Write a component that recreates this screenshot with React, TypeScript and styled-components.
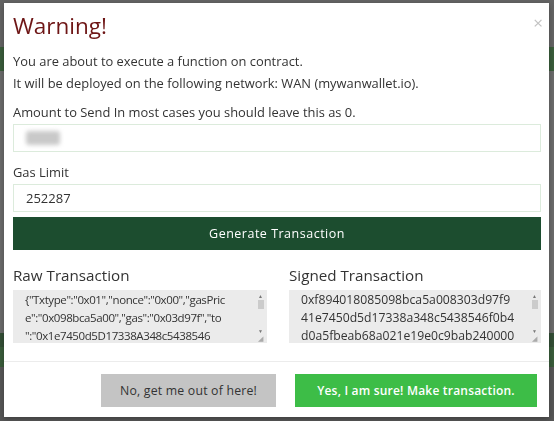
import React from "react";
import styled, { createGlobalStyle } from "styled-components";

const GlobalStyle = createGlobalStyle`
html, body {
  margin: 0;
  padding: 0;
  height: 100%;
  background: #6d6d6d;
  font-family: "Open Sans", "Noto Sans", Arial, sans-serif;
  color: #333;
  overflow: hidden;
}
#root { height: 100%; }
`;

/* page that sits under the backdrop */
const UnderPage = styled.div`
display: flex;
flex-direction: column;
height: 100%;
`;
const UnderBar = styled.div<{ h: number; color: string }>`
height: ${p => p.h}px;
background: ${p => p.color};
flex-shrink: 0;
`;

const Backdrop = styled.div`
position: fixed;
inset: 0;
background: rgba(70, 70, 70, 0.55);
`;

const Modal = styled.div`
position: fixed;
left: 4px;
top: 3px;
width: 545px;
height: 414px;
background: #fff;
display: flex;
flex-direction: column;
box-shadow: 0 2px 6px rgba(0, 0, 0, 0.3);
`;

const Body = styled.div`
padding: 9px 8px 0 9px;
position: relative;
`;

const Title = styled.h2`
margin: 0;
font-size: 22.5px;
line-height: 28px;
font-weight: 400;
color: #6e1616;
`;

const Close = styled.span`
position: absolute;
right: 6px;
top: 10px;
font-size: 17px;
color: #c2c2c2;
line-height: 20px;
`;

const Text = styled.p<{ gap?: number }>`
margin: ${p => p.gap ?? 0}px 0 0 0;
font-size: 12.9px;
line-height: 22px;
color: #333;
`;

const Input = styled.div<{ gap?: number }>`
margin-top: ${p => p.gap ?? 0}px;
height: 28px;
box-sizing: border-box;
border: 1px solid #dcebdc;
display: flex;
align-items: center;
padding: 0 12px;
font-size: 13px;
color: #333;
`;

const Blur = styled.span`
width: 34px;
height: 14px;
background: #c9c9c9;
border-radius: 3px;
filter: blur(2px);
`;

const DarkButton = styled.div`
margin-top: 5px;
height: 33px;
background: #1c4d2f;
color: #fff;
display: flex;
align-items: center;
justify-content: center;
font-size: 12.5px;
font-weight: 400;
letter-spacing: 0.5px;
`;

const Columns = styled.div`
display: grid;
grid-template-columns: 254px 252px;
column-gap: 22px;
margin-top: 15px;
`;

const Heading = styled.h3`
margin: 0;
font-size: 15.2px;
line-height: 20px;
font-weight: 400;
color: #333;
`;

const Area = styled.div`
margin-top: 5px;
height: 53px;
background: #ebebeb;
display: flex;
`;

const AreaText = styled.div<{ size: number; tight?: boolean }>`
flex: 1;
min-width: 0;
padding: 1px 0 0 12px;
font-size: ${p => p.size}px;
letter-spacing: ${p => (p.tight ? -0.4 : 0)}px;
line-height: 18px;
color: #333;
white-space: nowrap;
`;

const Scroll = styled.div`
width: 9px;
margin-right: 2px;
display: flex;
flex-direction: column;
align-items: center;
padding-top: 3px;
`;

const Arrow = styled.span`
font-size: 5px;
line-height: 6px;
color: #777;
`;

const Thumb = styled.div`
width: 6px;
height: 9px;
background: #cbcbcb;
margin-top: 1px;
`;

const Track = styled.div`
flex: 1;
min-height: 17px;
`;

const Grip = styled.span`
font-size: 7px;
line-height: 8px;
color: #aaa;
margin-top: 1px;
`;

const Divider = styled.div`
margin-top: 18px;
border-top: 1px solid #ececec;
`;

const Footer = styled.div`
display: flex;
justify-content: flex-end;
gap: 19px;
padding: 12px 12px 0 0;
`;

const FooterButton = styled.div<{ primary?: boolean; w: number }>`
width: ${p => p.w}px;
height: 33px;
display: flex;
align-items: center;
justify-content: center;
letter-spacing: 0.2px;
background: ${p => (p.primary ? "#3dbd47" : "#c4c4c4")};
color: ${p => (p.primary ? "#fff" : "#333")};
font-size: ${p => (p.primary ? 12 : 12.3)}px;
font-weight: ${p => (p.primary ? 600 : 400)};
`;

type TxBoxProps = { title: string; lines: string[]; size: number; tight?: boolean };

const TxBox = ({ title, lines, size, tight }: TxBoxProps) => (
  <div>
    <Heading>{title}</Heading>
    <Area>
      <AreaText size={size} tight={tight}>
        {lines.map(l => (
          <div key={l}>{l}</div>
        ))}
      </AreaText>
      <Scroll>
        <Arrow>▲</Arrow>
        <Thumb />
        <Track />
        <Arrow>▼</Arrow>
        <Grip>◢</Grip>
      </Scroll>
    </Area>
  </div>
);

export default function App() {
  return (
    <>
      <GlobalStyle />
      <UnderPage>
        <UnderBar h={47} color="#8a8a8a" />
        <UnderBar h={24} color="#2d7a2f" />
        <UnderBar h={262} color="#9a9a9a" />
        <UnderBar h={14} color="#1e5a24" />
        <UnderBar h={20} color="#2d7a2f" />
      </UnderPage>
      <Backdrop />
      <Modal>
        <Body>
          <Close>×</Close>
          <Title>Warning!</Title>
          <Text gap={10}>You are about to execute a function on contract.</Text>
          <Text>It will be deployed on the following network: WAN (mywanwallet.io).</Text>
          <Text gap={7}>Amount to Send In most cases you should leave this as 0.</Text>
          <Input gap={1}>
            <Blur />
          </Input>
          <Text gap={9}>Gas Limit</Text>
          <Input gap={1}>252287</Input>
          <DarkButton>Generate Transaction</DarkButton>
          <Columns>
            <TxBox
              title="Raw Transaction"
              size={11.5}
              tight
              lines={[
                '{"Txtype":"0x01","nonce":"0x00","gasPric',
                'e":"0x098bca5a00","gas":"0x03d97f","to',
                '":"0x1e7450d5D17338A348c5438546',
              ]}
            />
            <TxBox
              title="Signed Transaction"
              size={12.2}
              lines={[
                "0xf894018085098bca5a008303d97f9",
                "41e7450d5d17338a348c5438546f0b4",
                "d0a5fbeab68a021e19e0c9bab240000",
              ]}
            />
          </Columns>
        </Body>
        <Divider />
        <Footer>
          <FooterButton w={175}>No, get me out of here!</FooterButton>
          <FooterButton primary w={242}>
            Yes, I am sure! Make transaction.
          </FooterButton>
        </Footer>
      </Modal>
    </>
  );
}
